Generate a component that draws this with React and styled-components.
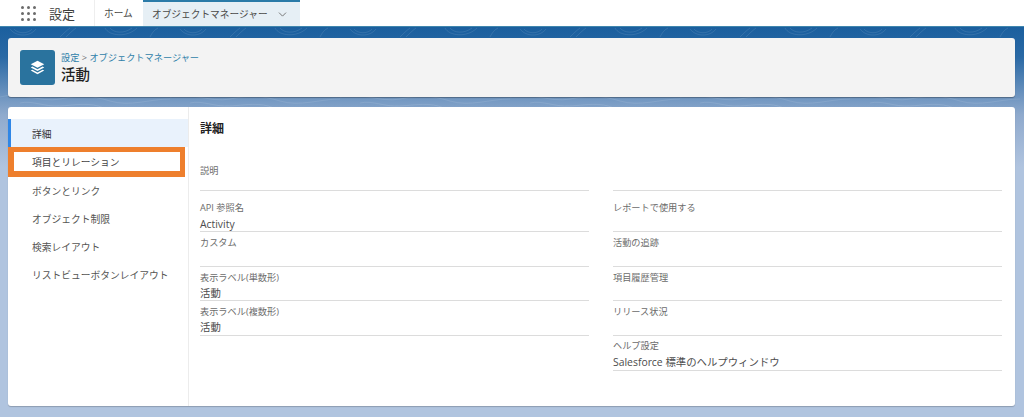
import React from "react";
import styled, { createGlobalStyle } from "styled-components";
import { ChevronDown } from "lucide-react";

const Global = createGlobalStyle`
  html, body { margin: 0; padding: 0; background: #fff; overflow: hidden; }
  body { font-family: "Open Sans", "Noto Sans CJK JP", sans-serif; color: #3e3e3c; }
  * { box-sizing: border-box; }
`;
const Page = styled.div`width: 1024px; height: 417px; display: flex; flex-direction: column; overflow: hidden;`;
const Nav = styled.nav`height: 26px; display: flex; align-items: stretch; background: #fff; flex: none;`;
const Launcher = styled.div`width: 94px; padding-left: 21px; display: flex; align-items: center; gap: 13px;`;
const Dots = styled.div`
  display: grid; grid-template-columns: repeat(3, 3px); grid-auto-rows: 3px; gap: 3px;
  span { background: #6b6b6b; border-radius: 50%; }
`;
const AppName = styled.span`font-size: 13px; color: #3e3e3c;`;
const Tab = styled.div`
  display: flex; align-items: center; font-size: 9.7px; white-space: nowrap; padding: 0 10px 0 9px;
  width: ${p => (p.$active ? "157px" : "49px")}; justify-content: space-between;
  color: #4a4a48; background: ${p => (p.$active ? "#e6eff5" : "#fff")};
  border-top: ${p => (p.$active ? "2px solid #2b7ba8" : "0")};
  border-left: ${p => (p.$active ? "0" : "1px solid #eee")};
  svg { color: #666; margin-right: 1px; }
`;
const Stage = styled.main`
  position: relative; flex: 1; display: flex; flex-direction: column; gap: 10px; padding: 11px 9px 11px 8px;
  border-top: 1px solid #3f86ae;
  background: linear-gradient(#1b5f9e 0, #2a69a5 30px, #8faacd 88px, #b0c4df 140px, #b0c4df 100%);
`;
const Contours = styled.svg`position: absolute; left: 0; top: 0; width: 1024px; height: 90px; pointer-events: none;`;
const HeaderCard = styled.header`
  position: relative; height: 59px; flex: none; background: #f3f3f3; border-radius: 3px;
  box-shadow: 0 1px 1px rgba(0,0,0,.3); display: flex; align-items: center; gap: 6px; padding: 0 12px;
`;
const ObjectIcon = styled.div`
  width: 35px; height: 35px; border-radius: 3px; background: #2a739e; display: flex; align-items: center; justify-content: center;
`;
const Titles = styled.div`display: flex; flex-direction: column; gap: 1px;`;
const Crumb = styled.div`font-size: 9.2px; line-height: 13px; color: #777; a { color: #2f7fa9; }`;
const Title = styled.h1`margin: 0; font-size: 14.5px; line-height: 20px; font-weight: 500; color: #1f1f1f;`;
const MainCard = styled.section`
  position: relative; flex: 1; display: flex; background: #fff; border-radius: 3px; box-shadow: 0 1px 1px rgba(0,0,0,.2);
`;
const Side = styled.aside`width: 181px; flex: none; padding-top: 12px; border-right: 1px solid #ececec; display: flex; flex-direction: column;`;
const SideItem = styled.div`
  height: 28px; display: flex; align-items: center; padding: 1px 0 0 24px; font-size: 9.75px; color: #555553; white-space: nowrap;
  margin-right: 3px; flex: none;
  ${p => p.$selected && "background: #e9f2fc; border-left: 3px solid #2f86e6; padding-left: 21px; color:#333; margin-right: 0;"}
  ${p => p.$marked && "height: 30px; margin-bottom: -1px; border: 6px solid #ee7f2d; border-width: 5px 5px 6px 6px; padding: 0 0 0 18px; color:#444;"}
`;
const Body = styled.div`flex: 1; padding: 12px 13px 0 11px;`;
const Heading = styled.h2`margin: 0; font-size: 12px; line-height: 19px; font-weight: 600; color: #222;`;
const Columns = styled.div`display: grid; grid-template-columns: 389px 389px; column-gap: 24px; margin-top: 22px; align-items: start;`;
const Field = styled.div`
  height: ${p => p.$h}px; border-bottom: 1px solid #dcdcdc; display: flex; flex-direction: column;
  padding-top: ${p => p.$pt || 0}px;
`;
const Label = styled.div`font-size: 9.2px; line-height: 14px; color: #6b6b6b;`;
const Value = styled.div`font-size: 10.4px; line-height: 15px; margin-top: ${p => p.$gap}px; color: #4c4c4c;`;
const Column = styled.div`display: flex; flex-direction: column;`;

const left = [
  { l: "説明", h: 31, pt: 4 },
  { l: "API 参照名", v: "Activity", h: 41, pt: 10, g: 2 },
  { l: "カスタム", h: 35, pt: 4 },
  { l: "表示ラベル(単数形)", v: "活動", h: 34, pt: 4, g: 1 },
  { l: "表示ラベル(複数形)", v: "活動", h: 35, pt: 4, g: 1 },
];
const right = [
  { l: "", h: 31 },
  { l: "レポートで使用する", h: 41, pt: 10 },
  { l: "活動の追跡", h: 35, pt: 4 },
  { l: "項目履歴管理", h: 34, pt: 4 },
  { l: "リリース状況", h: 35, pt: 4 },
  { l: "ヘルプ設定", v: "Salesforce 標準のヘルプウィンドウ", h: 35, pt: 3, g: 2 },
];
const nav = ["詳細", "項目とリレーション", "ボタンとリンク", "オブジェクト制限", "検索レイアウト", "リストビューボタンレイアウト"];

const renderField = (f, i) => (
  <Field key={i} $h={f.h} $pt={f.pt}>
    {f.l && <Label>{f.l}</Label>}
    {f.v && <Value $gap={f.g}>{f.v}</Value>}
  </Field>
);

export default function App() {
  return (
    <Page>
      <Global />
      <Nav>
        <Launcher>
          <Dots>{Array.from({ length: 9 }, (_, i) => <span key={i} />)}</Dots>
          <AppName>設定</AppName>
        </Launcher>
        <Tab>ホーム</Tab>
        <Tab $active>オブジェクトマネージャー<ChevronDown size={13} strokeWidth={1.6} /></Tab>
      </Nav>
      <Stage>
        <Contours viewBox="0 0 1024 90" fill="none" stroke="#fff" strokeOpacity=".1" strokeWidth="1">
          {[0, 170, 340, 510, 680, 850].map(x => (
            <g key={x} transform={`translate(${x} 0)`}>
              <path d="M10 2c6 8 20 8 26 0M14 2c4 5 14 5 18 0M60 10c4-4 6-6 10-9M66 10c4-4 6-6 10-9M105 1c4 8 22 10 32 0M110 1c4 5 14 6 22 0M150 10c2-4 4-7 8-9" />
              <path d="M0 70c20-6 40 6 60 2s30-4 50 2 40-2 60-2M20 76c12-3 24 4 40 3s30-4 44 2" />
            </g>
          ))}
        </Contours>
        <HeaderCard>
          <ObjectIcon>
            <svg width="17" height="17" viewBox="0 0 24 24" fill="#fff">
              <path d="M12 2.5 2.5 7.5 12 12.5l9.5-5z" />
              <path d="m4.8 10.6-2.3 1.3L12 17l9.5-5.1-2.3-1.3L12 14.5z" />
              <path d="m4.8 15.1-2.3 1.3L12 21.5l9.5-5.1-2.3-1.3L12 19z" />
            </svg>
          </ObjectIcon>
          <Titles>
            <Crumb><a>設定</a> &gt; <a>オブジェクトマネージャー</a></Crumb>
            <Title>活動</Title>
          </Titles>
        </HeaderCard>
        <MainCard>
          <Side>
            {nav.map((n, i) => (
              <SideItem key={n} $selected={i === 0} $marked={i === 1}>{n}</SideItem>
            ))}
          </Side>
          <Body>
            <Heading>詳細</Heading>
            <Columns>
              <Column>{left.map(renderField)}</Column>
              <Column>{right.map(renderField)}</Column>
            </Columns>
          </Body>
        </MainCard>
      </Stage>
    </Page>
  );
}
